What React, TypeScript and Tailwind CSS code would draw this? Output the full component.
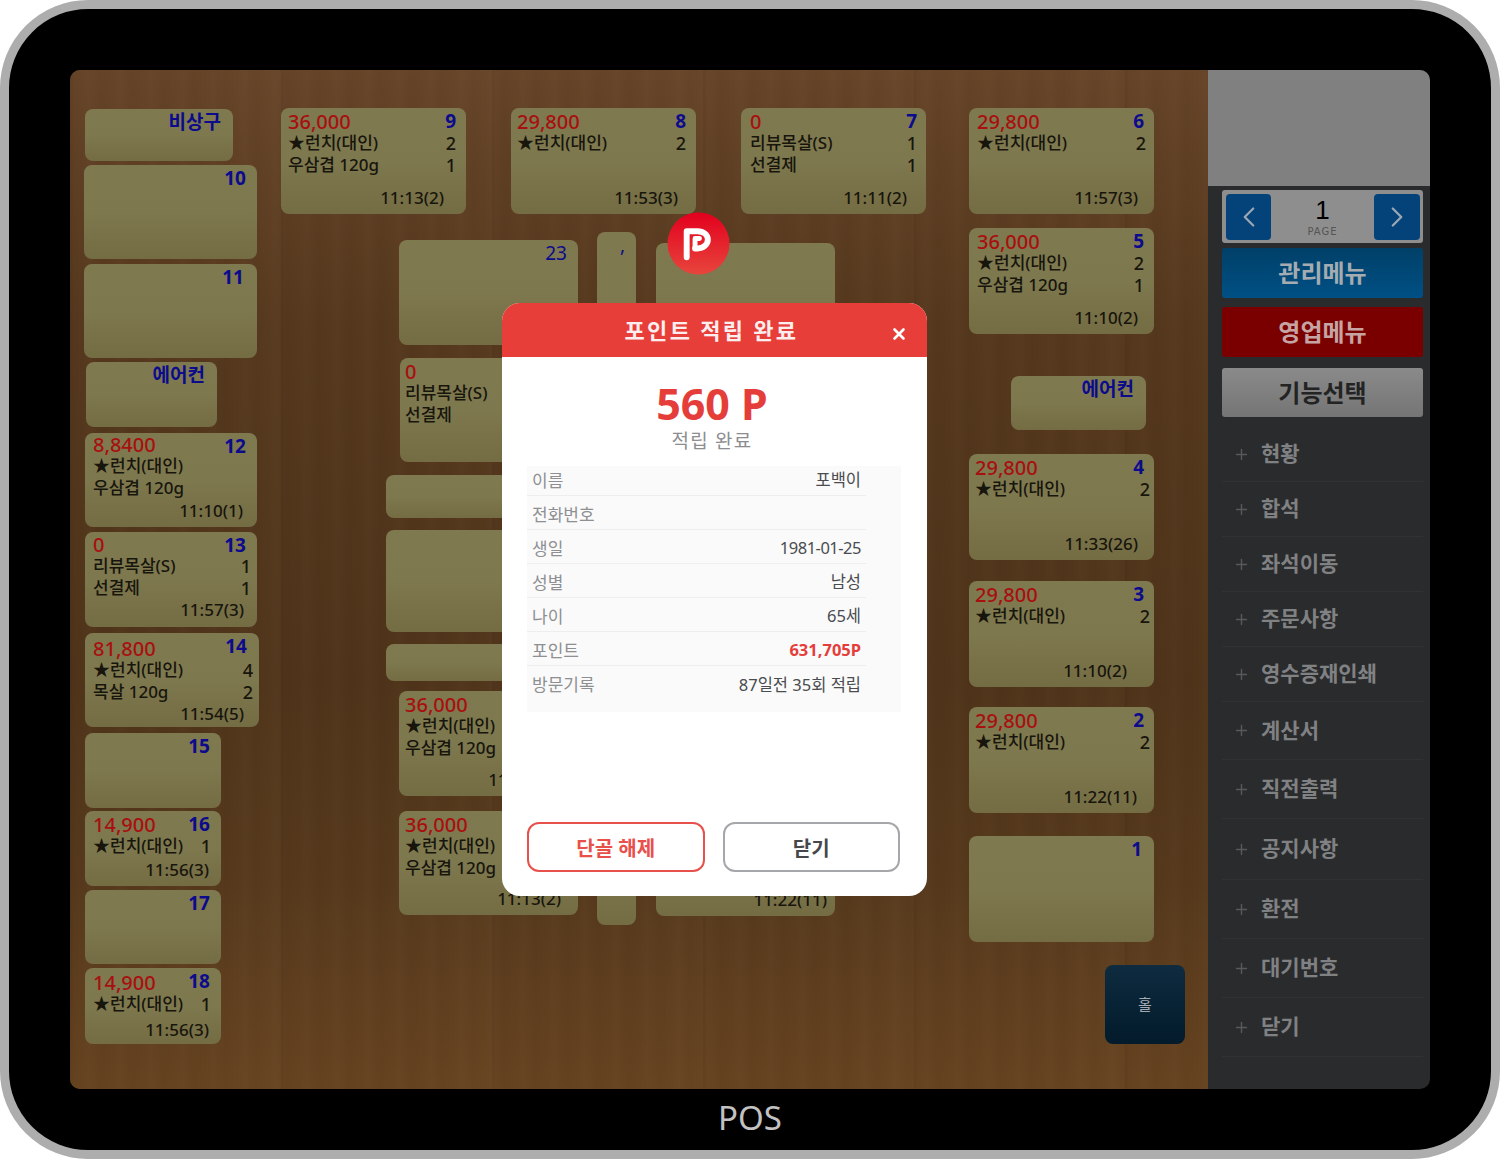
import React from "react";
import { ChevronLeft, ChevronRight, Plus, X } from "lucide-react";

interface TileData {
  x: number;
  y: number;
  w: number;
  h: number;
  price?: string;
  no?: string;
  noR?: number;
  noThin?: boolean;
  left?: number;
  top?: number;
  rows?: [string, string?][];
  qtyR?: number;
  time?: string;
  timeR?: number;
  timeB?: number;
}

const LUNCH = "★런치(대인)";
const BELLY = "우삼겹 120g";
const REVIEW = "리뷰목살(S)";
const PREPAID = "선결제";

// positions are measured from the top left of the floor canvas
const tiles: TileData[] = [
  { x: 15, y: 39, w: 148, h: 52, no: "비상구", noR: 12 },
  { x: 14, y: 95, w: 173, h: 94, no: "10", noR: 11 },
  { x: 14, y: 194, w: 173, h: 94, no: "11", noR: 13 },
  { x: 16, y: 292, w: 131, h: 65, no: "에어컨", noR: 12 },
  { x: 15, y: 363, w: 172, h: 94, price: "8,8400", no: "12", noR: 11, top: 0, rows: [[LUNCH], [BELLY]], time: "11:10(1)", timeR: 14, timeB: 5 },
  { x: 15, y: 462, w: 172, h: 95, price: "0", no: "13", noR: 11, top: 1, rows: [[REVIEW, "1"], [PREPAID, "1"]], qtyR: 6, time: "11:57(3)", timeR: 13, timeB: 6 },
  { x: 15, y: 563, w: 174, h: 94, price: "81,800", no: "14", noR: 12, top: 4, rows: [[LUNCH, "4"], ["목살 120g", "2"]], qtyR: 6, time: "11:54(5)", timeR: 15 },
  { x: 15, y: 663, w: 136, h: 75, no: "15", noR: 11 },
  { x: 15, y: 741, w: 136, h: 75, price: "14,900", no: "16", noR: 11, rows: [[LUNCH, "1"]], qtyR: 10, time: "11:56(3)", timeR: 12 },
  { x: 15, y: 820, w: 136, h: 74, no: "17", noR: 11 },
  { x: 15, y: 898, w: 136, h: 76, price: "14,900", no: "18", noR: 11, top: 3, rows: [[LUNCH, "1"]], qtyR: 10, time: "11:56(3)", timeR: 12, timeB: 3 },

  { x: 211, y: 38, w: 185, h: 106, price: "36,000", no: "9", noR: 10, left: 7, rows: [[LUNCH, "2"], [BELLY, "1"]], qtyR: 10, time: "11:13(2)", timeR: 22 },
  { x: 441, y: 38, w: 185, h: 106, price: "29,800", no: "8", noR: 10, left: 6, rows: [[LUNCH, "2"]], qtyR: 10, time: "11:53(3)", timeR: 18 },
  { x: 671, y: 38, w: 185, h: 106, price: "0", no: "7", noR: 9, left: 9, rows: [[REVIEW, "1"], [PREPAID, "1"]], qtyR: 9, time: "11:11(2)", timeR: 19 },
  { x: 899, y: 38, w: 185, h: 106, price: "29,800", no: "6", noR: 10, rows: [[LUNCH, "2"]], qtyR: 8, time: "11:57(3)", timeR: 16 },
  { x: 899, y: 158, w: 185, h: 106, price: "36,000", no: "5", noR: 10, rows: [[LUNCH, "2"], [BELLY, "1"]], qtyR: 10, time: "11:10(2)", timeR: 16 },
  { x: 941, y: 306, w: 135, h: 54, no: "에어컨", noR: 12 },
  { x: 899, y: 384, w: 185, h: 106, price: "29,800", no: "4", noR: 10, left: 6, rows: [[LUNCH, "2"]], qtyR: 4, time: "11:33(26)", timeR: 16 },
  { x: 899, y: 511, w: 185, h: 106, price: "29,800", no: "3", noR: 10, left: 6, rows: [[LUNCH, "2"]], qtyR: 4, time: "11:10(2)", timeR: 27 },
  { x: 899, y: 637, w: 185, h: 106, price: "29,800", no: "2", noR: 10, left: 6, rows: [[LUNCH, "2"]], qtyR: 4, time: "11:22(11)", timeR: 17 },
  { x: 899, y: 766, w: 185, h: 106, no: "1", noR: 12 },

  { x: 329, y: 170, w: 179, h: 105, no: "23", noR: 11, noThin: true },
  { x: 527, y: 162, w: 39, h: 200, no: ",", noR: 11, noThin: true },
  { x: 586, y: 173, w: 179, h: 100 },
  { x: 330, y: 288, w: 178, h: 104, price: "0", left: 5, rows: [[REVIEW], [PREPAID]] },
  { x: 316, y: 405, w: 192, h: 43 },
  { x: 316, y: 460, w: 192, h: 102 },
  { x: 316, y: 574, w: 192, h: 37 },
  { x: 329, y: 621, w: 179, h: 105, price: "36,000", left: 6, rows: [[LUNCH], [BELLY]], time: "11:13(2)", timeR: 26 },
  { x: 329, y: 741, w: 179, h: 104, price: "36,000", left: 6, rows: [[LUNCH], [BELLY]], time: "11:13(2)", timeR: 17 },
  { x: 527, y: 745, w: 39, h: 110 },
  { x: 586, y: 741, w: 179, h: 105, time: "11:22(11)", timeR: 8 },
];

const memberRows: [string, string][] = [
  ["이름", "포백이"],
  ["전화번호", ""],
  ["생일", "1981-01-25"],
  ["성별", "남성"],
  ["나이", "65세"],
  ["포인트", "631,705P"],
  ["방문기록", "87일전 35회 적립"],
];

const menuRows: [string, string][] = [
  ["현황", "h-[55px]"],
  ["합석", "h-[55px]"],
  ["좌석이동", "h-[55px]"],
  ["주문사항", "h-[55px]"],
  ["영수증재인쇄", "h-[55px]"],
  ["계산서", "h-[58px]"],
  ["직전출력", "h-[59px]"],
  ["공지사항", "h-[61px]"],
  ["환전", "h-[59px]"],
  ["대기번호", "h-[59px]"],
  ["닫기", "h-[59px]"],
];

const Tile: React.FC<{ tile: TileData }> = ({ tile }) => {
  const left = tile.left ?? 8;
  return (
    <div
      className="absolute flex flex-col rounded-lg bg-gradient-to-b from-[#7f794f] via-[#7e784f] to-[#746c43] text-[17px] font-medium leading-[22px] text-[#17150c]"
      style={{ left: tile.x, top: tile.y, width: tile.w, height: tile.h, paddingTop: tile.top ?? 2, paddingBottom: tile.timeB ?? 5 }}
    >
      {tile.no && (
        <div
          className={`absolute top-[1px] text-[19px] leading-[24px] text-[#0b0b8c] ${tile.noThin ? "font-normal" : "font-bold"}`}
          style={{ right: tile.noR }}
        >
          {tile.no}
        </div>
      )}
      {tile.price && (
        <div className="h-[22px] translate-y-px text-[20px] leading-[22px] text-[#a80f0f]" style={{ paddingLeft: left }}>
          {tile.price}
        </div>
      )}
      {tile.rows?.map(([name, qty]) => (
        <div key={name} className="flex h-[22px] justify-between whitespace-nowrap" style={{ paddingLeft: left, paddingRight: tile.qtyR }}>
          <span>{name}</span>
          {qty && <span className="text-[18px]">{qty}</span>}
        </div>
      ))}
      {tile.time && (
        <div className="mt-auto text-right" style={{ paddingRight: tile.timeR }}>
          {tile.time}
        </div>
      )}
    </div>
  );
};

const PointLogo = () => (
  <svg viewBox="0 0 64 64" className="h-[63px] w-[63px]">
    <defs>
      <linearGradient id="logoRed" x1="0" y1="0" x2="0" y2="1">
        <stop offset="0" stopColor="#e2001d" />
        <stop offset="1" stopColor="#e8453d" />
      </linearGradient>
    </defs>
    <circle cx="32" cy="32" r="31.5" fill="url(#logoRed)" />
    <path
      d="M20 46V19.5H31C37 19.5 41.5 23 41.5 28C41.5 33 37 37 31 37H28.5"
      fill="none"
      stroke="#fff"
      strokeWidth="6"
      strokeLinecap="round"
      strokeLinejoin="round"
    />
    <path d="M28.5 37V27H33" fill="none" stroke="#fff" strokeWidth="5" strokeLinecap="round" strokeLinejoin="round" />
  </svg>
);

const PointModal = () => (
  <div className="absolute left-[432px] top-[233px] flex h-[593px] w-[425px] flex-col overflow-hidden rounded-[18px] bg-white">
    <div className="relative flex h-[54px] items-center justify-center bg-[#e83e3a] pr-[6px] text-[22px] font-bold tracking-[2.3px] text-[#fbeeee]">
      포인트 적립 완료
      <X className="absolute right-[19px] top-[22px] h-[18px] w-[18px] text-white" strokeWidth={3.5} />
    </div>
    <div className="pr-[5px] pt-[22px] text-center">
      <div className="h-[49px] text-[43px] font-bold leading-[49px] text-[#e53e3a]">560 P</div>
      <div className="text-[19px] leading-[26px] tracking-[1.2px] text-[#8b8d90]">적립 완료</div>
    </div>
    <div className="ml-[25px] mr-[26px] mt-[12px] bg-[#fafafa] pb-[12px]">
      {memberRows.map(([label, value], i) => (
        <div
          key={label}
          className={`mr-[35px] flex items-center justify-between px-[5px] ${i === 0 ? "h-[30px]" : "h-[34px] pt-[4px]"} ${i < memberRows.length - 1 ? "border-b border-[#eeeeee]" : ""}`}
        >
          <span className="text-[17px] text-[#8d8f92]">{label}</span>
          <span
            className={`text-[16.5px] ${label === "포인트" ? "font-bold text-[#e53e3a]" : "text-[#4a4c50]"} ${label === "생일" ? "tracking-[-0.5px]" : ""}`}
          >
            {value}
          </span>
        </div>
      ))}
    </div>
    <div className="mt-auto flex gap-[18px] pb-[24px] pl-[25px] pr-[27px]">
      <button className="h-[50px] flex-1 rounded-xl border-2 border-[#e8504c] pt-[3px] text-[20px] font-bold text-[#e8504c]">단골 해제</button>
      <button className="h-[50px] flex-1 rounded-xl border-2 border-[#a5a7aa] pt-[3px] text-[20px] font-bold text-[#45474a]">닫기</button>
    </div>
  </div>
);

const Sidebar = () => (
  <div className="flex w-[222px] shrink-0 flex-col bg-[#2a2b2d]">
    <div className="h-[116px] shrink-0 bg-[#808080]" />
    <div className="pl-[14px] pr-[7px] pt-[4px]">
      <div className="flex h-[53px] items-center justify-between rounded-[3px] bg-[#8e8e8e] pl-[4px] pr-[3px]">
        <div className="flex h-[46px] w-[45px] items-center justify-center rounded-[4px] bg-[#04437a]">
          <ChevronLeft className="h-[34px] w-[34px] text-[#9aa6b2]" strokeWidth={1.6} />
        </div>
        <div className="flex flex-col items-center">
          <span className="text-[26px] leading-[30px] text-black [font-family:'Liberation_Sans',sans-serif]">1</span>
          <span className="mt-px text-[10px] leading-[12px] tracking-[1px] text-[#555555] [font-family:'DejaVu_Sans',sans-serif]">PAGE</span>
        </div>
        <div className="flex h-[46px] w-[46px] items-center justify-center rounded-[4px] bg-[#04437a]">
          <ChevronRight className="h-[34px] w-[34px] text-[#9aa6b2]" strokeWidth={1.6} />
        </div>
      </div>
      <div className="mt-[5px] flex h-[50px] items-center justify-center rounded-[3px] bg-gradient-to-b from-[#004068] to-[#005085] text-[24px] font-bold text-[#a4acb2]">관리메뉴</div>
      <div className="mt-[9px] flex h-[50px] items-center justify-center rounded-[3px] bg-[#7a0000] text-[24px] font-bold text-[#c7a4a4]">영업메뉴</div>
      <div className="mt-[11px] flex h-[49px] items-center justify-center rounded-[3px] bg-gradient-to-b from-[#8a8a8a] to-[#757575] text-[24px] font-bold text-[#232323]">기능선택</div>
    </div>
    <div className="mt-[10px] flex flex-col pl-[14px] pr-[7px]">
      {menuRows.map(([label, height]) => (
        <div key={label} className={`flex items-center gap-[11px] border-b border-[#313234] pl-[11px] ${height} text-[21px] font-bold text-[#808183]`}>
          <Plus className="h-[17px] w-[17px] text-[#58595b]" strokeWidth={2} />
          {label}
        </div>
      ))}
    </div>
  </div>
);

export default function App() {
  return (
    <div className="h-[1159px] w-[1500px] bg-white [font-family:'Noto_Sans','Noto_Sans_CJK_KR',sans-serif]">
      <div className="flex h-full flex-col rounded-[88px] border-[9px] border-[#adadad] bg-black px-[61px] pt-[61px]">
        <div className="flex h-[1019px] shrink-0 overflow-hidden rounded-[10px]">
          <div className="relative flex-1 bg-[#573a1e] bg-[repeating-linear-gradient(90deg,rgba(0,0,0,0.025)_0px,rgba(0,0,0,0)_11px,rgba(255,255,255,0.012)_19px,rgba(0,0,0,0.02)_31px),repeating-linear-gradient(90deg,rgba(0,0,0,0.05)_0px,rgba(0,0,0,0)_4px,rgba(0,0,0,0)_137px,rgba(255,210,150,0.015)_211px),linear-gradient(180deg,#664428_0%,#55381d_25%,#4f341a_60%,#56391c_80%,#664320_100%)]">
            {tiles.map((tile, i) => (
              <Tile key={i} tile={tile} />
            ))}
            <div className="absolute left-[1035px] top-[895px] flex h-[79px] w-[80px] items-center justify-center rounded-lg bg-gradient-to-b from-[#0f2b3f] to-[#031b2b] text-[15px] text-[#a3abb0]">
              홀
            </div>
            <div className="absolute left-[597px] top-[142px]">
              <PointLogo />
            </div>
            <PointModal />
          </div>
          <Sidebar />
        </div>
        <div className="flex flex-1 items-center justify-center pb-[4px] text-[33px] text-[#c2c2c2]">POS</div>
      </div>
    </div>
  );
}
